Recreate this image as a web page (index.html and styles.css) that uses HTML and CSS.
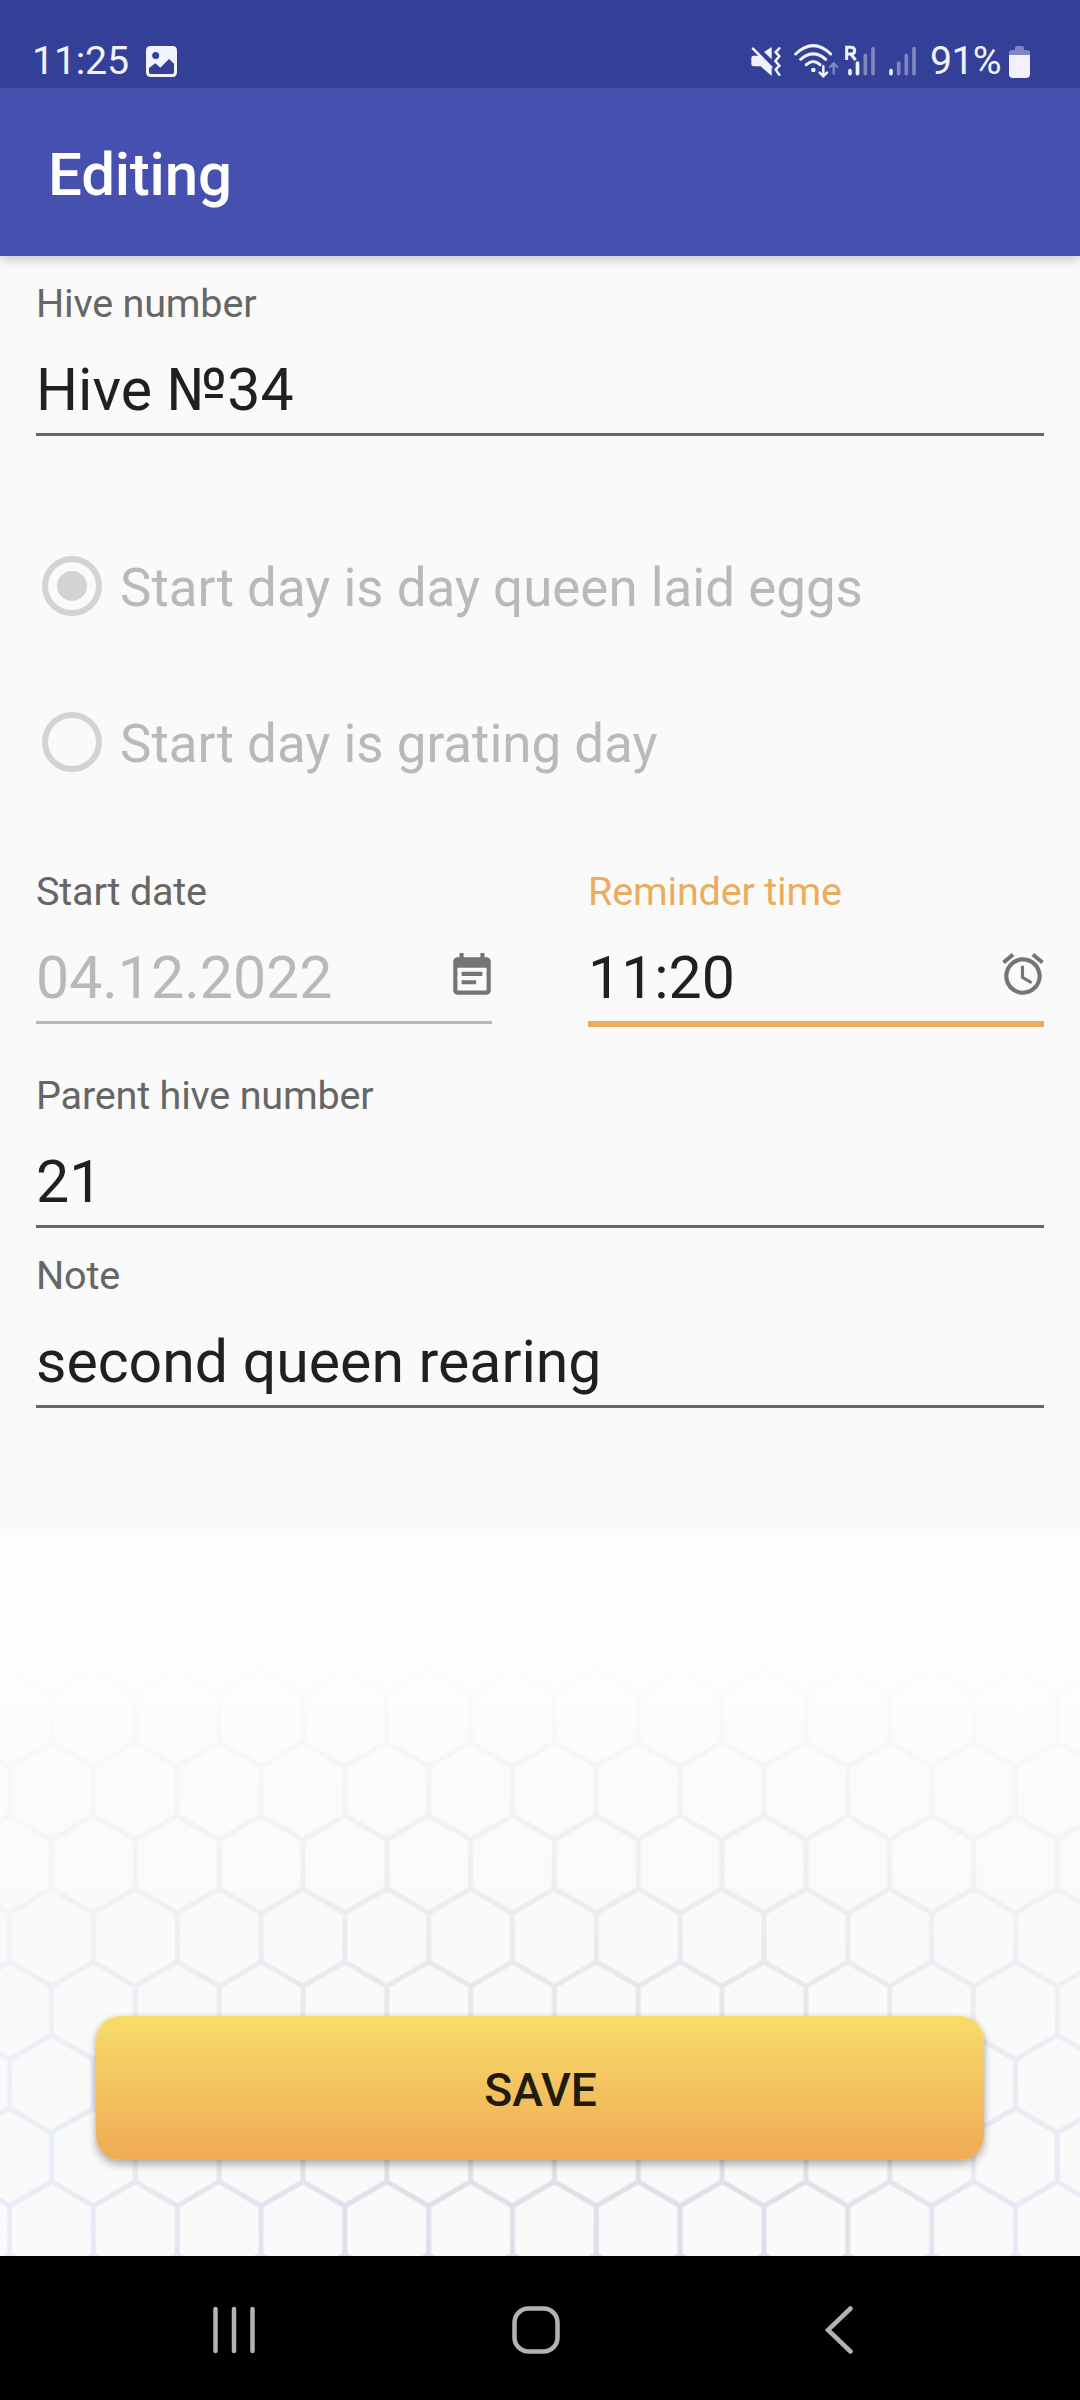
FILE: index.html
```html
<!DOCTYPE html>
<html lang="en">
<head>
<meta charset="utf-8">
<title>Editing</title>
<link rel="stylesheet" href="styles.css">
</head>
<body>
<div class="screen">
  <div class="status-bar">
    <div class="status-left">
      <span class="clock">11:25</span>
      <svg class="icon-picture" viewBox="0 0 93 93" width="31" height="31">
        <path fill="#f1f2fb" fill-rule="evenodd" d="M14 0H79Q93 0 93 14V79Q93 93 79 93H14Q0 93 0 79V14Q0 0 14 0ZM29 18A10.500 10.500 0 1 0 29 39A10.500 10.500 0 1 0 29 18ZM9 66V79Q9 84 14 84H79Q84 84 84 79V53L69 39L43 65L28 52Z"/>
      </svg>
    </div>
    <div class="status-right">
      <svg class="icon-signals" viewBox="90 70 505 105" width="168.330" height="35">
        <g fill="#f1f2fb">
          <path d="M94 112Q94 105 101 105H117L155 144V166L122 137H101Q94 137 94 130Z"/>
          <path d="M132 94L155 79V116Z"/>
          <circle cx="280" cy="148" r="7"/>
        </g>
        <g fill="none" stroke="#f1f2fb" stroke-linecap="round">
          <path stroke-width="7.500" d="M99 84L154 140M178 83L167 94L178 107L166 121L178 135L167 147L178 162"/>
          <path stroke-width="9" d="M227 100Q280 50 332 100M242 116Q280 83 317 116M259 132Q280 113 300 132"/>
          <path stroke-width="7.500" d="M310 137V167M299 156L310 167L321 156"/>
          <path stroke-width="7" opacity=".4" d="M341 159V129M330 139L341 128L352 139"/>
        </g>
        <g stroke-linecap="round" stroke-width="11" stroke="#f1f2fb">
          <path d="M390 150V159M412.500 127V159M513 150V159"/>
          <path opacity=".4" d="M436 104V159M459 84V159M536 127V159M559 104V159M582 84V159"/>
        </g>
        <path fill="none" stroke="#f1f2fb" stroke-width="9" d="M380 118V80H392Q404 80 404 90T392 100H380M392 100L407 118"/>
      </svg>
      <span class="battery-level">91%</span>
      <svg class="icon-battery" viewBox="0 0 63 96" width="21" height="32">
        <path fill="#7f86c4" d="M18 5Q18 0 23 0H40Q45 0 45 5V12H55Q63 12 63 20V27H0V20Q0 12 8 12H18Z"/>
        <path fill="#f1f2fb" d="M0 27H63V84Q63 96 51 96H12Q0 96 0 84Z"/>
      </svg>
    </div>
  </div>

  <header class="app-bar"><h1 class="title">Editing</h1></header>

  <main class="form">
    <div class="field">
      <div class="label">Hive number</div>
      <div class="value">Hive №34</div>
    </div>

    <div class="radio-group">
      <div class="radio-row">
        <span class="radio radio-checked"></span>
        <span class="radio-text">Start day is day queen laid eggs</span>
      </div>
      <div class="radio-row">
        <span class="radio"></span>
        <span class="radio-text">Start day is grating day</span>
      </div>
    </div>

    <div class="field-pair">
      <div class="field field-disabled">
        <div class="label">Start date</div>
        <div class="value">
          <span>04.12.2022</span>
          <svg class="icon-date" viewBox="0 0 24 24" width="50" height="50"><path d="M17 10H7v2h10v-2zm2-7h-1V1h-2v2H8V1H6v2H5c-1.110 0-1.990.9-1.990 2L3 19c0 1.100.89 2 2 2h14c1.100 0 2-.9 2-2V5c0-1.100-.9-2-2-2zm0 16H5V8h14v11zm-5-5H7v2h7v-2z"/></svg>
        </div>
      </div>
      <div class="field field-focused">
        <div class="label">Reminder time</div>
        <div class="value">
          <span>11:20</span>
          <svg class="icon-alarm" viewBox="0 0 24 24" width="50" height="50"><path d="M22 5.720l-4.600-3.860-1.290 1.530 4.600 3.860L22 5.720zM7.880 3.390L6.600 1.860 2 5.710l1.290 1.530 4.590-3.850zM12.500 8H11v6l4.750 2.850.75-1.230-4-2.370V8zM12 4c-4.970 0-9 4.030-9 9s4.020 9 9 9c4.970 0 9-4.030 9-9s-4.030-9-9-9zm0 16c-3.870 0-7-3.130-7-7s3.130-7 7-7 7 3.130 7 7-3.130 7-7 7z"/></svg>
        </div>
      </div>
    </div>

    <div class="field">
      <div class="label">Parent hive number</div>
      <div class="value">21</div>
    </div>
    <div class="field field-note">
      <div class="label">Note</div>
      <div class="value">second queen rearing</div>
    </div>
  </main>

  <footer class="actions">
    <svg class="honeycomb" viewBox="0 0 1080 721" width="1080" height="721">
      <defs>
        <pattern id="cells" width="83.820" height="146.450" patternUnits="userSpaceOnUse" patternTransform="translate(9.600 207.200)">
          <path fill="none" stroke="#fff" stroke-width="5" d="M-2 -1.200L0 0M0 24.400L41.910 0L83.820 24.400M0 24.400V73.200M83.820 24.400V73.200M0 73.200L41.910 97.600L83.820 73.200M41.910 97.600V146.450M41.910 -5V0M37 149.300L41.910 146.450L46.820 149.300"/>
        </pattern>
        <linearGradient id="fade" x1="0" y1="0" x2="0" y2="1">
          <stop offset=".17" stop-color="#fff" stop-opacity="0"/>
          <stop offset=".36" stop-color="#fff" stop-opacity=".26"/>
          <stop offset=".6" stop-color="#fff" stop-opacity=".62"/>
          <stop offset=".8" stop-color="#fff" stop-opacity=".88"/>
          <stop offset="1" stop-color="#fff"/>
        </linearGradient>
        <linearGradient id="tint">
          <stop offset="0" stop-color="#e8edf6"/>
          <stop offset=".35" stop-color="#dcdfe7"/>
          <stop offset=".72" stop-color="#dcdfe7"/>
          <stop offset="1" stop-color="#e7ebf4"/>
        </linearGradient>
        <mask id="lines" maskUnits="userSpaceOnUse" x="0" y="0" width="1080" height="721"><rect width="1080" height="721" fill="url(#cells)"/></mask>
        <mask id="depth" maskUnits="userSpaceOnUse" x="0" y="0" width="1080" height="721"><rect width="1080" height="721" fill="url(#fade)"/></mask>
      </defs>
      <g mask="url(#depth)"><rect width="1080" height="721" fill="url(#tint)" mask="url(#lines)"/></g>
    </svg>
    <button class="save">SAVE</button>
  </footer>

  <nav class="nav-bar">
    <svg class="nav-recent" viewBox="0 0 44 48" width="44" height="48"><path d="M3.500 3V45M22 3V45M40.500 3V45"/></svg>
    <svg class="nav-home" viewBox="0 0 48 48" width="48" height="48"><rect x="2.500" y="2.500" width="43" height="43" rx="14"/></svg>
    <svg class="nav-back" viewBox="0 0 30 48" width="30" height="48"><path d="M26.500 2.500L4 24L26.500 45.500"/></svg>
  </nav>
</div>
</body>
</html>
```
FILE: styles.css
```css
* { box-sizing: border-box; }

body {
  margin: 0;
  background: #fafafa;
  font-family: Roboto, "Noto Sans", sans-serif;
  color: #202020;
}

svg { display: block; flex: none; }

.screen {
  display: flex;
  flex-direction: column;
  width: 1080px;
  height: 2400px;
  overflow: hidden;
}

/* System status bar */
.status-bar {
  position: relative;
  z-index: 1;
  display: flex;
  justify-content: space-between;
  align-items: center;
  flex: none;
  height: 88px;
  padding: 35px 50px 0 32px;
  background: #343f97;
  color: #f1f2fb;
  font-size: 39.3px;
  line-height: 53px;
}

.status-left, .status-right { display: flex; align-items: center; }
.status-left { gap: 16px; }
.clock { width: 98px; letter-spacing: -0.2px; }
.battery-level { width: 71px; margin: 0 8px 0 12px; letter-spacing: -0.7px; white-space: nowrap; }

/* Title bar */
.app-bar {
  display: flex;
  align-items: center;
  flex: none;
  height: 168px;
  padding: 5px 48px 0;
  background: #4550af;
  color: #fff;
  box-shadow: 0 3px 12px rgba(0, 0, 0, 0.22);
}

.title { margin: 0; font-size: 60px; font-weight: 500; line-height: 70px; letter-spacing: -0.2px; }

/* Form */
.form {
  display: flex;
  flex-direction: column;
  flex: none;
  height: 1279px;
  padding: 24px 36px 0;
}

.label {
  height: 46px;
  padding-top: 1px;
  font-size: 39.6px;
  line-height: 46px;
  letter-spacing: -0.2px;
  color: #666;
}

.value {
  display: flex;
  justify-content: space-between;
  height: 110px;
  padding-top: 29px;
  border-bottom: 3px solid #666;
  font-size: 59px;
  line-height: 70px;
}

.value svg { fill: #757575; margin-top: 6px; }
.value .icon-date { margin-right: -5px; margin-top: 8px; }
.value .icon-alarm { margin-right: -4px; }

.field-note { margin-top: 24px; }

.radio-group { margin: 72px 0 48px; }

.radio-row {
  display: flex;
  align-items: center;
  gap: 18px;
  height: 156px;
  padding-left: 6px;
}

.radio {
  display: flex;
  align-items: center;
  justify-content: center;
  width: 60px;
  height: 60px;
  border: 6px solid #d3d3d3;
  border-radius: 50%;
}

.radio-checked::after {
  content: "";
  width: 30px;
  height: 30px;
  border-radius: 50%;
  background: #d3d3d3;
}

.radio-text {
  padding-top: 4px;
  font-size: 52.9px;
  line-height: 62px;
  color: #b9b9b9;
}

.field-pair {
  display: grid;
  grid-template-columns: 456px 456px;
  justify-content: space-between;
  align-items: start;
  height: 204px;
}

.field-disabled .value { color: #b9b9b9; border-color: #b9b9b9; }
.field-focused .label { color: #ebad5d; }
.field-focused .value { height: 113px; border-bottom: 6px solid #ebad5d; }

/* Save area over the honeycomb */
.actions {
  position: relative;
  flex: none;
  height: 721px;
  padding: 481px 96px 0;
  background: linear-gradient(#fdfdfd 0, #fdfdfd 18%, #fafafa 50%, #fafafa 100%);
}

.honeycomb { position: absolute; inset: 0; }

.save {
  position: relative;
  display: block;
  width: 888px;
  height: 144px;
  padding: 4px 0 0 1px;
  border: 0;
  border-radius: 24px;
  background: linear-gradient(#f7dd69, #f4c862 40%, #f0aa55);
  box-shadow: 0 5px 8px rgba(0, 0, 0, 0.28), 0 0 5px rgba(0, 0, 0, 0.1);
  color: #201b0c;
  font: 500 46.2px/54px Roboto, sans-serif;
}

/* System navigation */
.nav-bar {
  display: flex;
  flex: none;
  height: 144px;
  padding: 50px 226px 0 212px;
  background: #000;
  fill: none;
  stroke: #b3b3b3;
  stroke-width: 4.5;
  stroke-linecap: round;
}

.nav-home { margin-left: 256px; }
.nav-back { margin-left: auto; }
```
